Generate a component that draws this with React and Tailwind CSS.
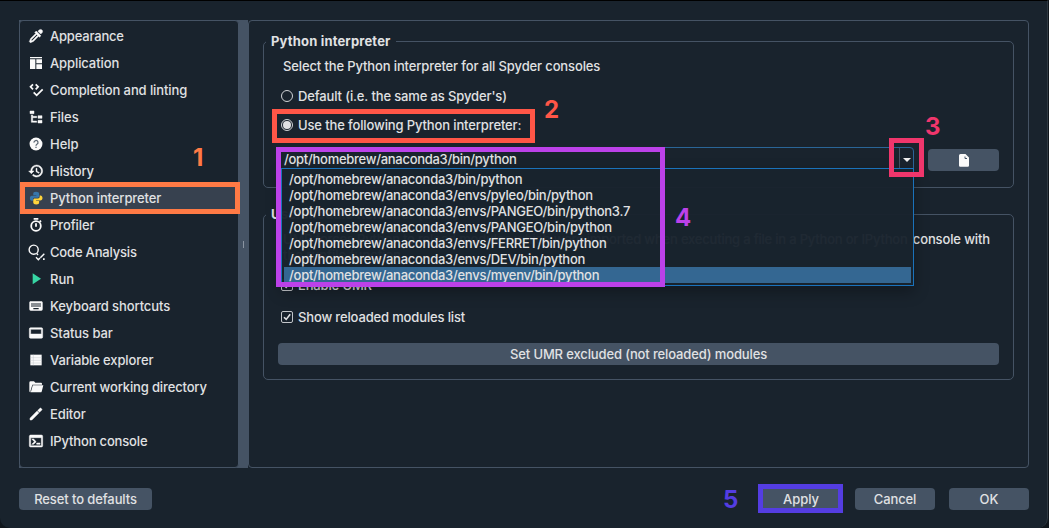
import React from "react";

const ICONS = {
  eyedropper: "M19.35,11.72L17.22,13.85L15.81,12.43L8.1,20.14L3.5,22L2,20.5L3.86,15.9L11.57,8.19L10.15,6.78L12.28,4.65L19.35,11.72M16.76,3C17.93,1.83 19.83,1.83 21,3C22.17,4.17 22.17,6.07 21,7.24L19.08,9.16L14.84,4.92L16.76,3M5.56,17.03L4.5,19.5L6.97,18.44L14.4,11L13,9.6L5.56,17.03Z",
  layout: "M3,3H21V5H3ZM3,6.2H11V21H3ZM12.5,6.2H21V12.5H12.5ZM14.5,14H21V21H12.5V14Z",
  tree: "M3,3H9V7H3V3M15,10H21V14H15V10M15,17H21V21H15V17M13,13H7V18H13V20H7L5,20V9H7V11H13V13Z",
  history: "M13.5,8H12V13L16.28,15.54L17,14.33L13.5,12.25V8M13,3A9,9 0 0,0 4,12H1L4.96,16.03L9,12H6A7,7 0 0,1 13,5A7,7 0 0,1 20,12A7,7 0 0,1 13,19C11.07,19 9.32,18.21 8.06,16.94L6.64,18.36C8.27,20 10.5,21 13,21A9,9 0 0,0 22,12A9,9 0 0,0 13,3",
  keyboard: "M19,10H17V8H19M19,13H17V11H19M16,10H14V8H16M16,13H14V11H16M16,17H8V15H16M7,10H5V8H7M7,13H5V11H7M8,11H10V13H8M8,8H10V10H8M11,11H13V13H11M11,8H13V10H11M20,5H4C2.89,5 2,5.89 2,7V17A2,2 0 0,0 4,19H20A2,2 0 0,0 22,17V7C22,5.89 21.1,5 20,5Z",
  dock: "M20,4H4A2,2 0 0,0 2,6V18A2,2 0 0,0 4,20H20A2,2 0 0,0 22,18V6A2,2 0 0,0 20,4M20,13.5H4V6.5H20V13.5Z",
  folder: "M2,5.5A2,2 0 0,1 4,3.5H9L11,5.5H19.5A1.5,1.5 0 0,1 21,7V8.5H6.5L3.8,17.5V19.9A2,2 0 0,1 2,18ZM7.2,9.5H23L20.6,18.6A2,2 0 0,1 18.8,20H4.2Z",
  pencil: "M20.71,4.63L19.37,3.29C19,2.9 18.35,2.9 17.96,3.29L14.5,6.75L17.25,9.5L20.71,6.04C21.1,5.65 21.1,5 20.71,4.63M13.6,7.6L3,18.2V21H5.8L16.4,10.4Z",
  console: "M20,19V7H4V19H20M20,3A2,2 0 0,1 22,5V19A2,2 0 0,1 20,21H4A2,2 0 0,1 2,19V5C2,3.89 2.9,3 4,3H20M13,17V15H18V17H13M9.58,13L5.57,9H8.4L11.7,12.3C12.09,12.69 12.09,13.33 11.7,13.72L8.42,17H5.59L9.58,13Z",
};

const BOLD_ICONS = ["eyedropper", "tree", "history", "dock", "pencil", "console"];

function SidebarIcon({ name }) {
  return (
    <svg viewBox="0 0 24 24" className="size-4 shrink-0 overflow-visible" fill="#fafafa" fillRule="evenodd">
      {ICONS[name] && <path d={ICONS[name]} stroke="#fafafa" strokeWidth={BOLD_ICONS.includes(name) ? 0.7 : 0} />}
      {name === "completion" && (
        <g fill="none" stroke="#fafafa" strokeWidth="2.6">
          <path d="M7.500,3.500L3.800,7.200L7.500,11M11.500,3.500L15.200,7.200L11.500,11M8.500,15.500L13,20L22,11" />
        </g>
      )}
      {name === "help" && (
        <>
          <circle cx="12" cy="12" r="9.7" />
          <path d="M9,10A3,3 0 1 1 13.4,12.4C12.3,13.1 12,13.5 12,14.8M12,16.2V18" fill="none" stroke="#5b6672" strokeWidth="1.9" />
        </>
      )}
      {name === "python" && (
        <g transform="translate(2 1.900) scale(0.84)">
          <path fill="#3776ab" d="M12,1C8,1 7,2.500 7,4.500V7H12.500V8H4.500C2,8 1,10 1,12.500S2.300,17 4.500,17H6.500V14.500C6.500,12.500 8,11.500 9.500,11.500H15C16.500,11.500 17.500,10.200 17.500,9V4.500C17.500,2.200 15,1 12,1Z" />
          <path fill="#ffd43b" d="M12.300,23.500C16,23.500 17.500,22 17.500,20V17.500H12V16.500H19.500C22,16.500 23.500,14.800 23.500,12S22,7.500 20,7.500H18.500V10C18.500,11.800 17,12.700 15.500,12.700H10C8.300,12.700 7,13.800 7,15.300V20C7,22.200 9,23.500 12.300,23.500Z" />
        </g>
      )}
      {name === "timer" && (
        <g fill="none" stroke="#fafafa" strokeWidth="2.7">
          <circle cx="12" cy="13.5" r="7.2" />
          <path d="M8.500,2.800H15.500M12,9.500V14.500M17.500,7.500L19.500,5.500" />
        </g>
      )}
      {name === "analysis" && (
        <g fill="none" stroke="#fafafa" strokeWidth="2.1">
          <circle cx="8.500" cy="8.500" r="6.800" />
          <path d="M13,14L15,16.500M12,20L15.500,23.500L18,21M18.500,20.500L24.500,14.500" />
          <path d="M22.500,21.500H25V24H22.500Z" fill="#fafafa" stroke="none" />
        </g>
      )}
      {name === "run" && <path d="M7,3.500V20L19.500,11.700Z" fill="#37d6a4" />}
      {name === "table" && (
        <>
          <path d="M3.500,4H20.500V20H3.500Z" />
          <path d="M3.500,8.500H20.500M3.500,12.500H20.500M3.500,16.500H20.500M8,4V20" stroke="#c4c9cd" strokeWidth="0.7" />
        </>
      )}
    </svg>
  );
}

const PAGES = [
  ["eyedropper", "Appearance", "tracking-[-0.2px]"],
  ["layout", "Application", "tracking-[-0.1px]"],
  ["completion", "Completion and linting", "tracking-[-0.1px]"],
  ["tree", "Files", "tracking-[-0.05px]"],
  ["help", "Help", "tracking-[-0.05px]"],
  ["history", "History", "tracking-[-0.12px]"],
  ["python", "Python interpreter", "tracking-[-0.1px]"],
  ["timer", "Profiler", "tracking-[-0.1px]"],
  ["analysis", "Code Analysis", "tracking-[-0.18px]"],
  ["run", "Run", ""],
  ["keyboard", "Keyboard shortcuts", "tracking-[-0.1px]"],
  ["dock", "Status bar", "tracking-[-0.08px]"],
  ["table", "Variable explorer", "tracking-[-0.12px]"],
  ["folder", "Current working directory", "tracking-[-0.14px]"],
  ["pencil", "Editor", "tracking-[-0.1px]"],
  ["console", "IPython console", "tracking-[-0.17px]"],
];

const INTERPRETERS = [
  "/opt/homebrew/anaconda3/bin/python",
  "/opt/homebrew/anaconda3/envs/pyleo/bin/python",
  "/opt/homebrew/anaconda3/envs/PANGEO/bin/python3.7",
  "/opt/homebrew/anaconda3/envs/PANGEO/bin/python",
  "/opt/homebrew/anaconda3/envs/FERRET/bin/python",
  "/opt/homebrew/anaconda3/envs/DEV/bin/python",
  "/opt/homebrew/anaconda3/envs/myenv/bin/python",
];

function Sidebar() {
  return (
    <div className="flex w-[229px] bg-[#455364]">
      <ul className="w-[220px] rounded-[4px] border border-[#455364] bg-[#19232d] pt-px">
        {PAGES.map(([icon, label, tracking]) => (
          <li
            key={label}
            className={`flex h-[27px] items-center gap-[6px] pl-2 ${tracking} ${icon === "python" ? "bg-[#37414f]" : ""}`}
          >
            <SidebarIcon name={icon} />
            {label}
          </li>
        ))}
      </ul>
      <div className="flex flex-1 items-center justify-center">
        <span className="h-[7px] w-px bg-[#8a94a1]" />
      </div>
    </div>
  );
}

function Radio({ checked, children }) {
  return (
    <label className="ml-[15px] flex h-5 items-center gap-[5px] tracking-[-0.13px]">
      <span className="flex size-3 items-center justify-center rounded-full border border-[#d0d3d6]">
        {checked && <span className="size-2 rounded-full bg-[#e0e1e3]" />}
      </span>
      {children}
    </label>
  );
}

function Checkbox({ children }) {
  return (
    <label className="ml-[15px] flex h-5 items-center gap-[5px] tracking-[-0.15px]">
      <span className="flex size-3 items-center justify-center rounded-[2px] border border-[#c3c6ca]">
        <svg viewBox="0 0 10 10" className="size-[10px]" fill="none" stroke="#e0e1e3" strokeWidth="1.6">
          <path d="M2,5.200L4.200,7.400L8.200,2.200" />
        </svg>
      </span>
      {children}
    </label>
  );
}

function Group({ title, className, children }) {
  return (
    <fieldset className={`w-[751px] rounded-[5px] border border-[#455364] pl-[2px] ${className}`}>
      <legend className="h-[19px] px-[5px] font-bold leading-[19px] tracking-[0.17px]">{title}</legend>
      {children}
    </fieldset>
  );
}

function InterpreterPicker() {
  return (
    <div className="relative z-10 flex h-[22px] w-[636px] rounded-t-[4px] border border-[#2a6597] leading-[22px]">
      <span className="flex-1 pl-[5px] tracking-[-0.28px]">{INTERPRETERS[0]}</span>
      <span className="flex w-[14px] items-center justify-center border-l border-[#455364] pt-[3px]">
        <svg viewBox="0 0 8 4" className="h-1 w-2" fill="#f0f0f0">
          <path d="M0,0H8L4,4Z" />
        </svg>
      </span>
      <ul className="absolute left-[2px] top-[20px] h-[118px] w-[633px] border border-[#1a72bb] bg-[#19232d]/97 p-[2px] leading-4 tracking-[-0.26px] shadow-[0_6px_14px_rgba(0,0,0,0.3)]">
        {INTERPRETERS.map((path, i) => (
          <li key={path} className={`h-4 pl-[5px] ${i === 6 ? "bg-[#346792]" : ""}`}>
            {path}
          </li>
        ))}
      </ul>
    </div>
  );
}

function Button({ className, children }) {
  return (
    <button className={`flex h-[22px] items-center justify-center rounded-[4px] bg-[#455364] ${className}`}>
      {children}
    </button>
  );
}

export default function App() {
  return (
    <div className="h-[528px] w-[1049px] overflow-hidden bg-[#10161c] font-['Inter',sans-serif] text-[13px] font-[450] leading-5 text-[#e0e1e3]">
      <div className="relative h-[528px] w-[1048px] rounded-b-[10px] border-r border-t border-r-[#2f3942] border-t-black bg-[#19232d] pl-[19px] pt-[19px]">
        <div className="flex h-[448px]">
          <Sidebar />
          <div className="w-[781px] rounded-[4px] border border-[#455364] pl-[14px] pt-[11px]">
            <Group title="Python interpreter" className="h-[156px]">
              <p className="ml-[17px] mt-[5px] tracking-[-0.13px]">Select the Python interpreter for all Spyder consoles</p>
              <div className="mt-[10px] flex flex-col gap-[9px]">
                <Radio>Default (i.e. the same as Spyder's)</Radio>
                <Radio checked>Use the following Python interpreter:</Radio>
              </div>
              <div className="ml-[12px] mt-[12px] flex gap-[14px]">
                <InterpreterPicker />
                <Button className="mt-[2px] w-[71px]">
                  <svg viewBox="0 0 10 13" className="h-[13px] w-[10px]">
                    <path d="M1.500,0H6.500L10,3.500V11.500A1.200,1.200 0 0 1 8.800,12.700H1.200A1.200,1.200 0 0 1 0,11.500V1.500A1.500,1.500 0 0 1 1.500,0Z" fill="#fafafa" />
                    <path d="M6,2.500V4.500H8" fill="none" stroke="#455364" strokeWidth="1" />
                  </svg>
                </Button>
              </div>
            </Group>
            <Group title="User Module Reloader (UMR)" className="mt-[17px] h-[175px]">
              <p className="ml-[17px] mt-[7px] h-8 w-[707px] whitespace-nowrap leading-4">
                <span className="flex justify-between">
                  <span className="tracking-[-0.2px]">
                    UMR forces Python to reload modules which were imported when executing a file in a Python or IPython
                  </span>
                  <span className="tracking-[-0.13px]">console with</span>
                </span>
                the runfile function.
              </p>
              <div className="mt-[12px] flex flex-col gap-[12px]">
                <Checkbox>Enable UMR</Checkbox>
                <Checkbox>Show reloaded modules list</Checkbox>
              </div>
              <Button className="ml-[12px] mt-[16px] w-[721px] tracking-[-0.13px]">
                Set UMR excluded (not reloaded) modules
              </Button>
            </Group>
          </div>
        </div>
        <div className="mt-5 flex pr-[18px]">
          <Button className="w-[133px] tracking-[-0.1px]">Reset to defaults</Button>
          <div className="ml-auto flex gap-[14px]">
            <Button className="w-20">Apply</Button>
            <Button className="w-20 tracking-[-0.1px]">Cancel</Button>
            <Button className="w-20">OK</Button>
          </div>
        </div>
      </div>

      <div className="absolute left-[20px] top-[182px] h-[32px] w-[220px] border-5 border-[#ff7a45]" />
      <div className="absolute left-[272px] top-[109px] h-[34px] w-[263px] border-5 border-[#ff5647]" />
      <div className="absolute left-[276px] top-[147px] z-20 h-[140px] w-[389px] border-5 border-[#bc41e9]" />
      <div className="absolute left-[889px] top-[138px] z-20 h-[39px] w-[35px] border-5 border-[#f0366c]" />
      <div className="absolute left-[758px] top-[484px] h-[29px] w-[85px] border-5 border-[#543de2]" />
      <div className="text-[24px] font-bold leading-6">
        <span className="absolute left-[193px] top-[146px] text-[#ff7a45]">1</span>
        <span className="absolute left-[544px] top-[98px] text-[#ff5647]">2</span>
        <span className="absolute left-[925px] top-[115px] text-[#f0366c]">3</span>
        <span className="absolute left-[675px] top-[206px] z-20 text-[#bc41e9]">4</span>
        <span className="absolute left-[723px] top-[488px] text-[#543de2]">5</span>
      </div>
    </div>
  );
}
